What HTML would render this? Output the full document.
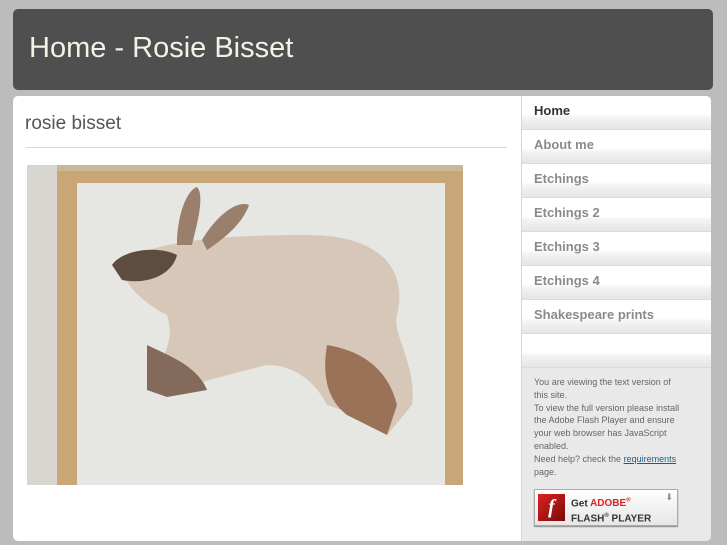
<!DOCTYPE html>
<html><head><style>
body{margin:0;width:727px;height:545px;background:#bcbcbc;font-family:"Liberation Sans",sans-serif;position:relative;overflow:hidden}
.hdr{position:absolute;left:13px;top:9px;width:700px;height:81px;background:#4f4f4f;border-radius:5px}
.hdr h1{margin:0;position:absolute;left:16px;top:23px;font-weight:normal;font-size:29px;color:#f4f1e6}
.main{position:absolute;left:13px;top:96px;width:698px;height:445px;background:#fff;border-radius:5px;overflow:hidden}
.t{position:absolute;left:12px;top:17px;font-size:19px;color:#555}
.hr{position:absolute;left:13px;top:51px;width:481px;height:1px;background:#d8d8d8}
.side{position:absolute;left:508px;top:0;width:190px;height:445px;background:#e9e9e9;border-left:1px solid #d6d6d6}
.nav{border-bottom:1px solid #dcdcdc;background:linear-gradient(#fff 0,#fff 55%,#f4f4f4 65%,#ebebeb 85%,#e6e6e6 100%);font-size:13px;font-weight:bold;color:#8a8a8a;padding-left:12px;line-height:30px;box-sizing:border-box;height:34px}
.info{position:absolute;left:12px;top:280px;font-size:9px;line-height:12.8px;color:#666;width:152px}
.info a{color:#1a5f8a;text-decoration:underline}
.fl{position:absolute;left:12px;top:393px;width:142px;height:35px;background:linear-gradient(#fff,#e6e6e6);border:1px solid #aaa;box-shadow:0 1px 1px #888}
</style></head><body>
<div class="hdr"><h1>Home - Rosie Bisset</h1></div>
<div class="main">
<div class="t">rosie bisset</div>
<div class="hr"></div>
<svg style="position:absolute;left:14px;top:69px" width="436" height="320" viewBox="0 0 436 320">
<rect width="436" height="320" fill="#d8d6d0"/>
<rect x="30" y="0" width="406" height="12" fill="#c9b795"/>
<rect x="30" y="6" width="406" height="314" fill="#c8a678"/>
<rect x="50" y="18" width="368" height="302" fill="#e6e6e2"/>
<path d="M95 100 C120 75 200 70 280 70 C360 70 380 110 370 150 C365 170 390 200 385 240 L360 270 L330 250 L300 240 C290 220 270 200 240 200 C200 210 160 220 140 230 L120 225 C130 200 150 180 140 150 C120 140 95 120 95 100Z" fill="#d2bfae" opacity=".8"/>
<path d="M150 80 C150 50 160 25 170 22 C178 30 170 60 165 80Z M175 75 C190 50 210 35 222 40 C215 60 195 75 180 85Z" fill="#9a806c"/>
<path d="M85 100 C95 85 130 80 150 90 C145 110 120 120 95 115Z" fill="#5f4c40"/>
<path d="M300 180 C330 185 360 200 370 240 L360 270 L320 250 C300 235 295 210 300 180Z" fill="#9a7257"/>
<path d="M120 180 C140 190 170 200 180 225 L140 232 L120 225Z" fill="#836a5a"/>
</svg>
<div class="side">
<div class="nav" style="color:#333">Home</div>
<div class="nav">About me</div>
<div class="nav">Etchings</div>
<div class="nav">Etchings 2</div>
<div class="nav">Etchings 3</div>
<div class="nav">Etchings 4</div>
<div class="nav">Shakespeare prints</div>
<div class="nav"></div>
<div class="info">You are viewing the text version of this site.<br>To view the full version please install the Adobe Flash Player and ensure your web browser has JavaScript enabled.<br>Need help? check the <a>requirements</a> page.</div>
<div class="fl">
<div style="position:absolute;left:3px;top:4px;width:27px;height:27px;background:linear-gradient(135deg,#d22,#7a0a0a);color:#fff;font:italic bold 20px 'Liberation Serif',serif;text-align:center;line-height:27px">f</div>
<div style="position:absolute;left:36px;top:5px;font-size:10px;font-weight:bold;color:#333;line-height:12px">Get <span style="color:#d22">ADOBE<sup style="font-size:6px">®</sup></span><br>FLASH<sup style="font-size:6px">®</sup> PLAYER</div>
<div style="position:absolute;right:4px;top:2px;color:#888;font-size:9px">⬇</div>
</div>
</div>
</div>
</body></html>
